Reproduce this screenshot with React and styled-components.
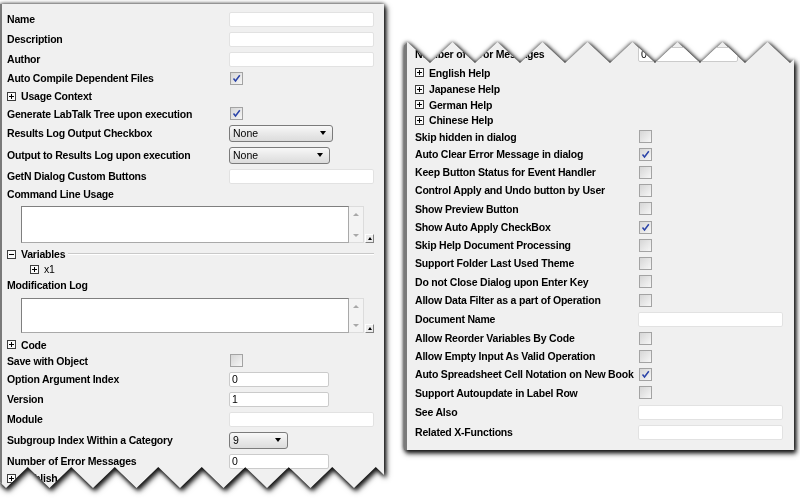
import React from "react";
import styled, { createGlobalStyle } from "styled-components";

const GlobalStyle = createGlobalStyle`
  html, body {
    margin: 0;
    padding: 0;
    background: #fff;
  }
  body {
    font-family: "Liberation Sans", Arial, sans-serif;
    color: #000;
  }
`;

// builds the saw-tooth line of a torn paper edge, from x = 0 to x = width
const tornEdge = (width, period, tipX, tipY, notchY) => {
    const half = period / 2;
    const yAt = (x) => {
        const d = (((x - tipX) % period) + period) % period;
        return d <= half
            ? tipY + ((notchY - tipY) * d) / half
            : notchY + ((tipY - notchY) * (d - half)) / half;
    };
    const pts = [[0, yAt(0)]];
    let v = tipX - period * Math.ceil(tipX / period);
    let j = 0;
    while (v < width) {
        if (v > 0) pts.push([v, j % 2 === 0 ? tipY : notchY]);
        v += half;
        j += 1;
    }
    pts.push([width, yAt(width)]);
    return pts;
};

const toPolygon = (pts) =>
    `polygon(${pts.map(([x, y]) => `${x.toFixed(2)}px ${y.toFixed(2)}px`).join(", ")})`;

const LEFT_W = 384;
const LEFT_H = 488;
const RIGHT_W = 390;
const RIGHT_H = 408;

const LEFT_CLIP = toPolygon([
    [0, 0],
    [LEFT_W, 0],
    ...tornEdge(LEFT_W, 43.5, 6, 484, 463).reverse(),
]);

const RIGHT_CLIP = toPolygon([
    ...tornEdge(RIGHT_W, 45, 3.5, 0, 21),
    [RIGHT_W, RIGHT_H],
    [0, RIGHT_H],
]);

const LEFT_ROWS = [
    { label: "Name", kind: "input", h: 20 },
    { label: "Description", kind: "input", h: 20 },
    { label: "Author", kind: "input", h: 20 },
    { label: "Auto Compile Dependent Files", kind: "check", checked: true, h: 18 },
    { label: "Usage Context", kind: "group", h: 18 },
    { label: "Generate LabTalk Tree upon execution", kind: "check", checked: true, h: 17 },
    { label: "Results Log Output Checkbox", kind: "select", value: "None", w: 104, h: 22 },
    { label: "Output to Results Log upon execution", kind: "select", value: "None", w: 101, h: 22 },
    { label: "GetN Dialog Custom Buttons", kind: "input", h: 20 },
    { label: "Command Line Usage", kind: "plain", h: 16 },
    { kind: "memo", memoH: 37, h: 45 },
    { label: "Variables", kind: "section", h: 14 },
    { label: "x1", kind: "group", sub: true, h: 16 },
    { label: "Modification Log", kind: "plain", h: 16 },
    { kind: "memo", memoH: 35, h: 44 },
    { label: "Code", kind: "group", h: 15 },
    { label: "Save with Object", kind: "check", h: 17 },
    { label: "Option Argument Index", kind: "input", w: 100, value: "0", h: 20 },
    { label: "Version", kind: "input", w: 100, value: "1", h: 20 },
    { label: "Module", kind: "input", h: 20 },
    { label: "Subgroup Index Within a Category", kind: "select", value: "9", w: 59, h: 22 },
    { label: "Number of Error Messages", kind: "input", w: 100, value: "0", h: 20 },
    { label: "Publish", kind: "group", h: 14 },
];

const RIGHT_ROWS = [
    { label: "Number of Error Messages", kind: "input", w: 100, value: "0", h: 20 },
    { label: "English Help", kind: "group", h: 17 },
    { label: "Japanese Help", kind: "group", h: 16 },
    { label: "German Help", kind: "group", h: 15 },
    { label: "Chinese Help", kind: "group", h: 16 },
    { label: "Skip hidden in dialog", kind: "check", h: 17 },
    { label: "Auto Clear Error Message in dialog", kind: "check", checked: true, h: 18 },
    { label: "Keep Button Status for Event Handler", kind: "check", h: 18 },
    { label: "Control Apply and Undo button by User", kind: "check", h: 18 },
    { label: "Show Preview Button", kind: "check", h: 19 },
    { label: "Show Auto Apply CheckBox", kind: "check", checked: true, h: 18 },
    { label: "Skip Help Document Processing", kind: "check", h: 18 },
    { label: "Support Folder Last Used Theme", kind: "check", h: 18 },
    { label: "Do not Close Dialog upon Enter Key", kind: "check", h: 19 },
    { label: "Allow Data Filter as a part of Operation", kind: "check", h: 18 },
    { label: "Document Name", kind: "input", h: 20 },
    { label: "Allow Reorder Variables By Code", kind: "check", h: 18 },
    { label: "Allow Empty Input As Valid Operation", kind: "check", h: 18 },
    { label: "Auto Spreadsheet Cell Notation on New Book", kind: "check", checked: true, h: 18 },
    { label: "Support Autoupdate in Label Row", kind: "check", h: 19 },
    { label: "See Also", kind: "input", h: 20 },
    { label: "Related X-Functions", kind: "input", h: 20 },
];

const Toggle = ({ open }) => (
    <ToggleIcon viewBox="0 0 9 9" width="9" height="9">
        <rect x="0.5" y="0.5" width="8" height="8" fill="#fafafa" stroke="#3c3c3c" />
        <line x1="2" y1="4.5" x2="7" y2="4.5" stroke="#000" />
        {!open && <line x1="4.5" y1="2" x2="4.5" y2="7" stroke="#000" />}
    </ToggleIcon>
);

const Check = ({ checked }) => (
    <CheckBox>
        {checked && (
            <svg viewBox="0 0 11 11" width="11" height="11">
                <path d="M2.5 5.5 L4.5 8 L8.8 2.2" fill="none" stroke="#2a43a8" strokeWidth="1.5" />
            </svg>
        )}
    </CheckBox>
);

const Memo = ({ height }) => (
    <MemoWrap>
        <MemoField style={{ height }} />
        <MemoScroll style={{ height }}>
            <ScrollArrow />
            <ScrollArrow $down />
        </MemoScroll>
        <CornerButton>
            <TinyUp />
        </CornerButton>
    </MemoWrap>
);

const Control = ({ row }) => {
    if (row.kind === "input") {
        return <Field $w={row.w || 145} $filled={!!row.value}>{row.value}</Field>;
    }
    if (row.kind === "check") return <Check checked={row.checked} />;
    if (row.kind === "select") {
        return (
            <Select $w={row.w}>
                <span>{row.value}</span>
                <DropArrow />
            </Select>
        );
    }
    return null;
};

const PropRow = ({ row, labelW }) => {
    if (row.kind === "memo") {
        return (
            <Row $h={row.h}>
                <Memo height={row.memoH} />
            </Row>
        );
    }
    if (row.kind === "group") {
        return (
            <Row $h={row.h}>
                <GroupLabel $sub={row.sub}>
                    <Toggle />
                    {row.label}
                </GroupLabel>
            </Row>
        );
    }
    if (row.kind === "section") {
        return (
            <Row $h={row.h}>
                <GroupLabel>
                    <Toggle open />
                    {row.label}
                </GroupLabel>
                <Rule />
            </Row>
        );
    }
    return (
        <Row $h={row.h}>
            <Label $w={labelW}>{row.label}</Label>
            <Control row={row} />
        </Row>
    );
};

const App = () => (
    <>
        <GlobalStyle />
        <Page>
            <Sheet>
                <Paper $w={LEFT_W} $h={LEFT_H} $clip={LEFT_CLIP} $edge={2} $pad="5px 10px 0 5px">
                    {LEFT_ROWS.map((row, i) => (
                        <PropRow key={i} row={row} labelW={222} />
                    ))}
                </Paper>
            </Sheet>
            <Sheet $right>
                <Paper $w={RIGHT_W} $h={RIGHT_H} $clip={RIGHT_CLIP} $edge={3} $pad="2px 11px 0 8px">
                    {RIGHT_ROWS.map((row, i) => (
                        <PropRow key={i} row={row} labelW={223} />
                    ))}
                </Paper>
            </Sheet>
        </Page>
    </>
);

const Page = styled.div`
    display: flex;
    align-items: flex-start;
    padding-top: 4px;
    width: 800px;
    height: 502px;
    box-sizing: border-box;
    overflow: hidden;
`;

const Sheet = styled.div`
    flex: none;
    margin-left: ${(p) => (p.$right ? "20px" : "0")};
    margin-top: ${(p) => (p.$right ? "38px" : "0")};
    filter: drop-shadow(0 0 2px rgba(0, 0, 0, 0.85)) drop-shadow(2px 3px 2px rgba(0, 0, 0, 0.85));
`;

const Paper = styled.div`
    width: ${(p) => p.$w}px;
    height: ${(p) => p.$h}px;
    box-sizing: border-box;
    padding: ${(p) => p.$pad};
    background: #f0f0f0;
    border-left: ${(p) => p.$edge}px solid #7a7a7a;
    clip-path: ${(p) => p.$clip};
    display: flex;
    flex-direction: column;
`;

const Row = styled.div`
    display: flex;
    align-items: center;
    height: ${(p) => p.$h}px;
    flex: none;
`;

const Label = styled.div`
    width: ${(p) => p.$w}px;
    flex: none;
    font-weight: bold;
    font-size: 10.5px;
    letter-spacing: -0.2px;
    white-space: nowrap;
`;

const GroupLabel = styled.div`
    display: flex;
    align-items: center;
    gap: 5px;
    padding-left: ${(p) => (p.$sub ? "23px" : "0")};
    font-weight: ${(p) => (p.$sub ? "normal" : "bold")};
    font-size: 10.5px;
    letter-spacing: -0.2px;
    white-space: nowrap;
`;

const ToggleIcon = styled.svg`
    flex: none;
    display: block;
`;

const Rule = styled.div`
    flex: 1;
    margin-left: 3px;
    height: 0;
    border-top: 1px solid #c9c9c9;
    border-bottom: 1px solid #fff;
`;

const Field = styled.div`
    width: ${(p) => p.$w}px;
    height: 15px;
    box-sizing: border-box;
    background: #fff;
    border: 1px solid ${(p) => (p.$filled ? "#cbcbcb" : "#e2e2e2")};
    border-radius: 2px;
    padding-left: 2px;
    font-size: 10.5px;
    line-height: 13px;
`;

const CheckBox = styled.span`
    width: 13px;
    height: 13px;
    margin-left: 1px;
    box-sizing: border-box;
    border: 1px solid #a3a3a3;
    background: linear-gradient(135deg, #d6d6d6, #f6f6f6);
    display: flex;
    align-items: center;
    justify-content: center;
`;

const Select = styled.div`
    width: ${(p) => p.$w}px;
    height: 17px;
    box-sizing: border-box;
    border: 1px solid #7b7b7b;
    border-radius: 3px;
    background: linear-gradient(#f8f8f8, #e9e9e9 50%, #dcdcdc);
    display: flex;
    align-items: center;
    justify-content: space-between;
    padding: 0 6px 0 3px;
    font-size: 10.5px;
`;

const DropArrow = styled.span`
    width: 0;
    height: 0;
    border-left: 3.5px solid transparent;
    border-right: 3.5px solid transparent;
    border-top: 4px solid #000;
`;

const MemoWrap = styled.div`
    display: flex;
    align-items: flex-end;
    margin-left: 14px;
`;

const MemoField = styled.div`
    width: 328px;
    box-sizing: border-box;
    background: #fff;
    border: 1px solid #7f7f7f;
    border-right-color: #a9a9a9;
    border-bottom-color: #a9a9a9;
`;

const MemoScroll = styled.div`
    width: 15px;
    box-sizing: border-box;
    border: 1px solid #dcdcdc;
    border-left: none;
    background: #f3f3f3;
    display: flex;
    flex-direction: column;
    align-items: center;
    justify-content: space-between;
    padding: 6px 0 5px;
`;

const ScrollArrow = styled.span`
    width: 0;
    height: 0;
    border-left: 3px solid transparent;
    border-right: 3px solid transparent;
    ${(p) => (p.$down ? "border-top: 3px solid #a8a8a8;" : "border-bottom: 3px solid #a8a8a8;")}
`;

const CornerButton = styled.div`
    width: 9px;
    height: 9px;
    margin-left: 1px;
    box-sizing: border-box;
    border: 1px solid #fff;
    border-right-color: #808080;
    border-bottom-color: #808080;
    background: #ececec;
    display: flex;
    align-items: center;
    justify-content: center;
`;

const TinyUp = styled.span`
    width: 0;
    height: 0;
    border-left: 2.5px solid transparent;
    border-right: 2.5px solid transparent;
    border-bottom: 3px solid #000;
`;

export default App;
